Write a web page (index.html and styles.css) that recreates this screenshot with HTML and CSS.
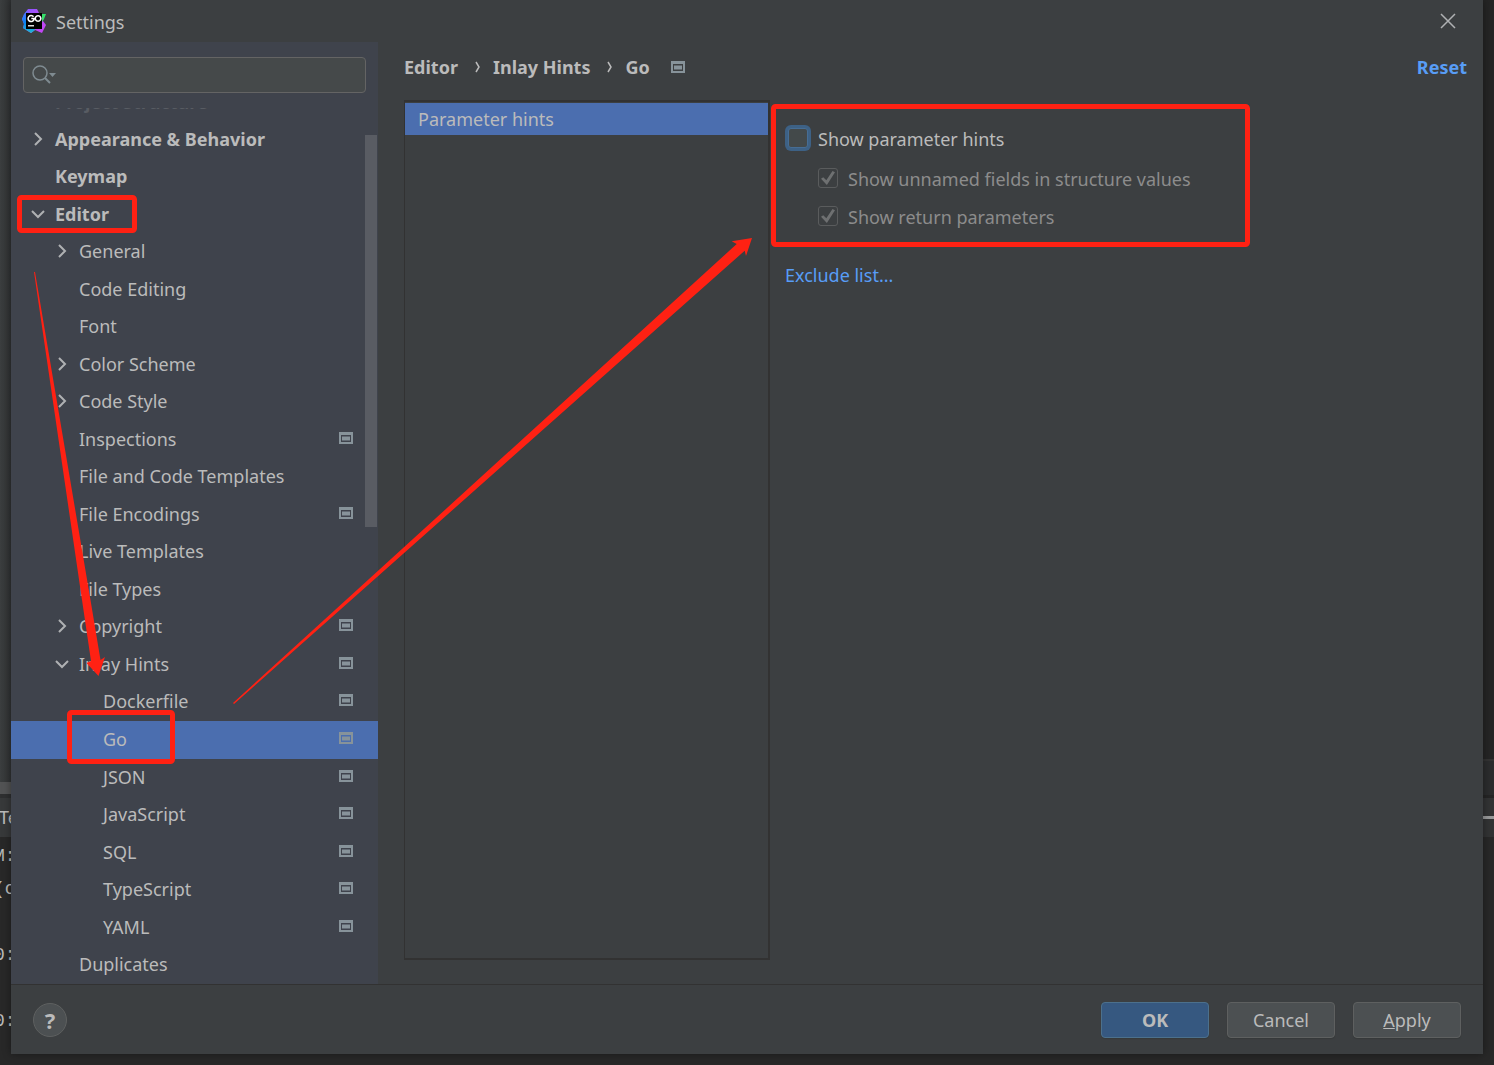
FILE: index.html
```html
<!DOCTYPE html>
<html lang="en">
<head>
<meta charset="utf-8">
<title>Settings</title>
<link rel="stylesheet" href="styles.css">
</head>
<body>
<svg class="defs" aria-hidden="true">
  <symbol id="right" viewBox="0 0 14 14"><path d="M4 1l6 6-6 6" fill="none" stroke="#afb1b3" stroke-width="2"/></symbol>
  <symbol id="down" viewBox="0 0 14 14"><path d="M1 4l6 6 6-6" fill="none" stroke="#afb1b3" stroke-width="2"/></symbol>
  <symbol id="crumb" viewBox="0 0 6 12"><path d="M1 1l3 5-3 5" fill="none" stroke="#bbbbbb" stroke-width="1.500"/></symbol>
  <symbol id="project" viewBox="0 0 14 12"><path d="M0 0h14v12H0zM2 3v7h10V3z" fill="#87939a" fill-rule="evenodd"/><path d="M3 4.500h8v4H3z" fill="#87939a"/></symbol>
</svg>

<div class="ide" aria-hidden="true">
  <div class="ide-left">
    <div class="ide-panel"></div>
    <div class="ide-scroll"></div>
    <div class="ide-tab">Te</div>
    <div class="ide-console"><span>M:</span><span>(c</span><span></span><span>0:</span><span></span><span>0:</span></div>
  </div>
  <div class="ide-right">
    <div class="ide-editor"></div>
    <div class="ide-status"></div>
    <div class="ide-tools"><i class="ide-minus"></i></div>
  </div>
</div>

<div class="dialog" role="dialog" aria-labelledby="title">
  <header class="titlebar">
    <svg class="logo" viewBox="0 0 24 24" aria-hidden="true">
      <defs>
        <linearGradient id="g1" x1="0" y1="0" x2="1" y2="1"><stop offset="0" stop-color="#7a5cff"/><stop offset=".5" stop-color="#b74af7"/><stop offset="1" stop-color="#c545f5"/></linearGradient>
        <linearGradient id="g2" x1="0" y1="0" x2="0" y2="1"><stop offset="0" stop-color="#5a6cff"/><stop offset=".5" stop-color="#0b84f5"/><stop offset="1" stop-color="#20b9d0"/></linearGradient>
      </defs>
      <path d="M6 0h9l2 4 5 3-1 5 3 4-4 8-7-3-4 3-8-5 1-4-2-5 3-6z" fill="url(#g1)"/>
      <path d="M5 2L2 5 0 10l2 5-1 4 8 5 4-3-5-13z" fill="url(#g2)"/>
      <path d="M18 8l2-3h4l-2 5-2 3z" fill="#36e06a"/>
      <path d="M4 4h16v16H4z" fill="#000"/>
      <path d="M11.500 7.800a3 3 0 1 0 .3 3V9.500H9.300M16 6.700a2.800 2.800 0 1 0 .1 0z" fill="none" stroke="#fff" stroke-width="1.600"/>
      <path d="M6 16h6v1.500H6z" fill="#ddd"/>
    </svg>
    <h1 id="title">Settings</h1>
    <button class="close" type="button" aria-label="Close"><svg width="16" height="16" viewBox="0 0 16 16"><path d="M1 1l14 14M15 1L1 15" stroke="#afb1b3" stroke-width="1.500"/></svg></button>
  </header>

  <div class="body">
    <nav class="sidebar" aria-label="Settings categories">
      <div class="search">
        <svg width="26" height="20" viewBox="0 0 26 20" aria-hidden="true"><circle cx="8" cy="8" r="7" fill="none" stroke="#7f8b91" stroke-width="1.500"/><path d="M13 13l5 5" stroke="#7f8b91" stroke-width="2"/><path d="M17 8h7l-3.500 4z" fill="#7f8b91"/></svg>
        <input type="text" aria-label="Search settings">
      </div>
      <div class="scrolled"><span>Project Structure</span></div>
      <div class="tree-area">
        <ul class="tree">
          <li class="top"><svg class="arrow"><use href="#right"/></svg><span>Appearance &amp; Behavior</span></li>
          <li class="top"><i class="arrow"></i><span>Keymap</span></li>
          <li class="top"><svg class="arrow"><use href="#down"/></svg><span>Editor</span></li>
          <li class="l1"><svg class="arrow"><use href="#right"/></svg><span>General</span></li>
          <li class="l1"><i class="arrow"></i><span>Code Editing</span></li>
          <li class="l1"><i class="arrow"></i><span>Font</span></li>
          <li class="l1"><svg class="arrow"><use href="#right"/></svg><span>Color Scheme</span></li>
          <li class="l1"><svg class="arrow"><use href="#right"/></svg><span>Code Style</span></li>
          <li class="l1"><i class="arrow"></i><span>Inspections</span><svg class="proj"><use href="#project"/></svg></li>
          <li class="l1"><i class="arrow"></i><span>File and Code Templates</span></li>
          <li class="l1"><i class="arrow"></i><span>File Encodings</span><svg class="proj"><use href="#project"/></svg></li>
          <li class="l1"><i class="arrow"></i><span>Live Templates</span></li>
          <li class="l1"><i class="arrow"></i><span>File Types</span></li>
          <li class="l1"><svg class="arrow"><use href="#right"/></svg><span>Copyright</span><svg class="proj"><use href="#project"/></svg></li>
          <li class="l1"><svg class="arrow"><use href="#down"/></svg><span>Inlay Hints</span><svg class="proj"><use href="#project"/></svg></li>
          <li class="l2"><i class="arrow"></i><span>Dockerfile</span><svg class="proj"><use href="#project"/></svg></li>
          <li class="l2 selected"><i class="arrow"></i><span>Go</span><svg class="proj"><use href="#project"/></svg></li>
          <li class="l2"><i class="arrow"></i><span>JSON</span><svg class="proj"><use href="#project"/></svg></li>
          <li class="l2"><i class="arrow"></i><span>JavaScript</span><svg class="proj"><use href="#project"/></svg></li>
          <li class="l2"><i class="arrow"></i><span>SQL</span><svg class="proj"><use href="#project"/></svg></li>
          <li class="l2"><i class="arrow"></i><span>TypeScript</span><svg class="proj"><use href="#project"/></svg></li>
          <li class="l2"><i class="arrow"></i><span>YAML</span><svg class="proj"><use href="#project"/></svg></li>
          <li class="l1"><i class="arrow"></i><span>Duplicates</span></li>
        </ul>
        <div class="thumb"></div>
      </div>
    </nav>

    <main class="page">
      <div class="crumbs">
        <span>Editor</span><svg class="sep"><use href="#crumb"/></svg>
        <span>Inlay Hints</span><svg class="sep"><use href="#crumb"/></svg>
        <span>Go</span><svg class="proj"><use href="#project"/></svg>
        <a class="reset" href="#">Reset</a>
      </div>
      <div class="panes">
        <ul class="list"><li>Parameter hints</li></ul>
        <div class="options">
          <label class="option main"><input type="checkbox">Show parameter hints</label>
          <label class="option sub"><input type="checkbox" checked disabled>Show unnamed fields in structure values</label>
          <label class="option sub"><input type="checkbox" checked disabled>Show return parameters</label>
          <a class="exclude" href="#">Exclude list...</a>
        </div>
      </div>
    </main>
  </div>

  <footer class="footer">
    <button class="help" type="button" aria-label="Help">?</button>
    <button class="btn ok" type="button">OK</button>
    <button class="btn" type="button">Cancel</button>
    <button class="btn" type="button"><u>A</u>pply</button>
  </footer>
</div>

<svg class="marks" width="1494" height="1065" viewBox="0 0 1494 1065" aria-hidden="true">
  <g fill="none" stroke="#ff2113" stroke-width="5">
    <rect x="19.500" y="197.500" width="115" height="33" rx="2"/>
    <rect x="69.500" y="712.500" width="103" height="49" rx="2"/>
    <rect x="773.500" y="106.500" width="474" height="138" rx="2"/>
  </g>
  <g fill="#ff2113">
    <path d="M34 272h1L90.500 600 100.500 660 105 657 98.500 676 86.500 663 91 661 82 600z"/>
    <path d="M233 703L736.700 244 731.700 241.300 752 238 746 256 744.700 250.700 234 704z"/>
  </g>
</svg>
</body>
</html>
```

FILE: styles.css
```css
* { box-sizing: border-box; }

body {
  margin: 0;
  position: relative;
  min-height: 100vh;
  display: flex;
  padding: 0 11px 11px;
  background: #282828;
  color: #bbbbbb;
  font: 18px/24px "Noto Sans", "Open Sans", sans-serif;
}

ul { list-style: none; margin: 0; padding: 0; }
a { color: #589df6; text-decoration: none; }
button, input { font: inherit; color: inherit; }
.defs { position: absolute; width: 0; height: 0; }

/* Editor window behind the dialog */
.ide {
  position: absolute;
  inset: 0;
  display: flex;
  justify-content: space-between;
  overflow: hidden;
}
.ide-left, .ide-right { width: 11px; white-space: nowrap; }
.ide-panel { height: 782px; background: linear-gradient(90deg, #3b3e3f, #303233); }
.ide-scroll { height: 16px; background: #525354; border-bottom: 4px solid #2e2f30; }
.ide-tab { height: 39px; line-height: 39px; background: #37393a; }
.ide-tab { text-indent: -1px; }
.ide-console { padding-top: 3px; font: 18px/33px "Liberation Mono", monospace; text-indent: -6px; }
.ide-console span { display: block; height: 33px; }
.ide-editor { height: 761px; background: #252525; border-bottom: 2px solid #333333; }
.ide-status { height: 37px; background: #2b2c2d; border-bottom: 3px solid #252525; }
.ide-tools { height: 39px; background: #323334; display: flex; align-items: center; }
.ide-minus { flex: 1; height: 3px; background: #98999a; }

.dialog {
  position: relative;
  flex: 1;
  display: flex;
  flex-direction: column;
  background: #3c3f41;
  box-shadow: 0 0 8px rgba(0, 0, 0, .4);
}

.titlebar { display: flex; align-items: center; height: 42px; padding: 0 24px 0 11px; }
.logo { width: 24px; height: 24px; }
.titlebar h1 { margin: 0 auto 0 10px; padding-top: 2px; font-size: 18px; font-weight: 400; }
.close { display: flex; padding: 3px; border: 0; background: none; }

.body { flex: 1; display: flex; }
.sidebar {
  width: 367px;
  display: flex;
  flex-direction: column;
  padding-top: 15px;
  background: #3f434c;
}
.search {
  display: flex;
  align-items: center;
  height: 36px;
  margin: 0 12px;
  padding: 0 8px;
  border: 1px solid #646464;
  border-radius: 4px;
  background: #45494a;
}
.search input { flex: 1; min-width: 0; border: 0; outline: 0; background: none; }

/* Row that has been scrolled almost out of view */
.scrolled {
  display: flex;
  align-items: flex-end;
  height: 13px;
  margin-top: 15px;
  padding: 0 0 7px 44px;
  overflow: hidden;
  color: #585c63;
  font-weight: 700;
}

.tree-area { flex: 1; position: relative; display: flex; }
.tree { flex: 1; display: flex; flex-direction: column; }
.tree li { flex: 1; display: flex; align-items: center; min-height: 30px; padding: 0 25px 2px 20px; }
.tree .l1 { padding-left: 44px; }
.tree .l2 { padding-left: 68px; }
.tree .top { font-weight: 700; }
.tree .selected { background: #4b6eaf; }
.arrow { width: 14px; height: 14px; margin-right: 10px; }
.proj { width: 14px; height: 12px; }
.tree .proj { margin: 0 0 2px auto; }
.thumb {
  position: absolute;
  top: 14px;
  right: 1px;
  width: 12px;
  height: 392px;
  background: #595c63;
}

.page { flex: 1; display: flex; flex-direction: column; padding: 13px 16px 24px 26px; }
.crumbs { display: flex; align-items: center; height: 24px; font-weight: 700; }
.sep { width: 6px; height: 12px; margin: 0 12px 0 17px; }
.crumbs .proj { margin-left: 21px; }
.reset { margin-left: auto; }

.panes { flex: 1; display: flex; margin-top: 21px; }
.list { width: 366px; padding-top: 1px; border: 2px solid #323232; border-width: 2px 2px 2px 1px; }
.list li { height: 32px; padding-left: 13px; line-height: 32px; background: #4b6eaf; }

.options { flex: 1; display: flex; flex-direction: column; align-items: flex-start; padding: 26px 0 0 15px; }
.option { display: flex; align-items: center; gap: 10px; height: 26px; }
.option input {
  appearance: none;
  display: grid;
  place-items: center;
  width: 20px;
  height: 20px;
  margin: 0 0 2px;
  border: 1px solid #5a5c5d;
  border-radius: 3px;
}
.main { padding-left: 3px; }
.main input { border-color: #466d94; background: #43494a; box-shadow: 0 0 0 3px #3d6185; }
.sub { margin: 14px 0 0 33px; color: #8c8c8c; }
.sub + .sub { margin-top: 12px; }
.sub input::after {
  content: "";
  width: 14px;
  height: 14px;
  background: #6e7071;
  clip-path: polygon(0 55%, 16% 45%, 38% 66%, 82% 0, 100% 9%, 42% 100%);
}
.exclude { margin-top: 33px; }

.footer {
  display: flex;
  align-items: center;
  gap: 18px;
  height: 70px;
  padding: 0 22px;
  border-top: 1px solid #323232;
}
.help {
  width: 34px;
  height: 34px;
  margin-right: auto;
  padding: 0;
  border: 1px solid #5e6060;
  border-radius: 50%;
  background: #4c5052;
  font-size: 22px;
  font-weight: 700;
}
.btn {
  width: 108px;
  height: 36px;
  padding: 1px 0 0;
  border: 1px solid #5e6060;
  border-radius: 4px;
  background: #4c5052;
  box-shadow: 0 1px 1px #36393a;
}
.ok { border-color: #4c708c; background: #365880; font-weight: 700; }

/* Annotations drawn over the window */
.marks { position: absolute; top: 0; left: 0; pointer-events: none; }
```
